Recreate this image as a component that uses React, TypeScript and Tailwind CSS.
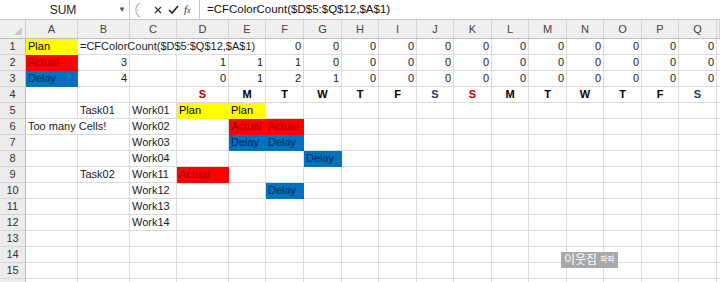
import React from "react";

const COLS = "grid-cols-[26px_52px_52px_47px_52px_37px_38px_38px_37px_38px_37px_38px_37px_38px_37px_38px_37px_38px_3px]";
const letters = ["A", "B", "C", "D", "E", "F", "G", "H", "I", "J", "K", "L", "M", "N", "O", "P", "Q", ""];

type Cell = {
  v?: string;
  fill?: "plan" | "actual" | "delay";
  align?: "left" | "right" | "center";
  span?: number;
  day?: "sun" | "sat" | "day";
};

const fillCls = {
  plan: "bg-[#ffff00] text-black",
  actual: "bg-[#ff0000] text-[#9c0006]",
  delay: "bg-[#0070c0] text-[#0f2a55]",
};

const zeros = (n: number): Cell[] => Array.from({ length: n }, () => ({ v: "0", align: "right" as const }));
const blanks = (n: number): Cell[] => Array.from({ length: n }, () => ({}));

const days: Cell[] = ["S", "M", "T", "W", "T", "F", "S", "S", "M", "T", "W", "T", "F", "S"].map((d, i) => ({
  v: d,
  align: "center",
  day: i === 0 || i === 7 ? "sun" : i === 6 || i === 13 ? "sat" : "day",
}));

const rows: Cell[][] = [
  [{ v: "Plan", fill: "plan" }, { v: "=CFColorCount($D$5:$Q$12,$A$1)", span: 4 }, ...zeros(12)],
  [{ v: "Actual", fill: "actual" }, { v: "3", align: "right" }, {}, { v: "1", align: "right" }, { v: "1", align: "right" }, { v: "1", align: "right" }, ...zeros(11)],
  [{ v: "Delay", fill: "delay" }, { v: "4", align: "right" }, {}, { v: "0", align: "right" }, { v: "1", align: "right" }, { v: "2", align: "right" }, { v: "1", align: "right" }, ...zeros(10)],
  [{}, {}, {}, ...days],
  [{}, { v: "Task01" }, { v: "Work01" }, { v: "Plan", fill: "plan" }, { v: "Plan", fill: "plan" }, ...blanks(12)],
  [{ v: "Too many Cells!", span: 2 }, { v: "Work02" }, {}, { v: "Actual", fill: "actual" }, { v: "Actual", fill: "actual" }, ...blanks(11)],
  [{}, {}, { v: "Work03" }, {}, { v: "Delay", fill: "delay" }, { v: "Delay", fill: "delay" }, ...blanks(11)],
  [{}, {}, { v: "Work04" }, {}, {}, {}, { v: "Delay", fill: "delay" }, ...blanks(10)],
  [{}, { v: "Task02" }, { v: "Work11" }, { v: "Actual", fill: "actual" }, ...blanks(13)],
  [{}, {}, { v: "Work12" }, {}, {}, { v: "Delay", fill: "delay" }, ...blanks(11)],
  [{}, {}, { v: "Work13" }, ...blanks(14)],
  [{}, {}, { v: "Work14" }, ...blanks(14)],
  blanks(17),
  blanks(17),
  blanks(17),
  blanks(17),
];

function GridCell({ c }: { c: Cell }) {
  const align = c.align === "right" ? "justify-end" : c.align === "center" ? "justify-center" : "justify-start";
  const dayCls = c.day === "sun" ? "font-bold text-[#c00000]" : c.day === "sat" ? "font-bold text-[#1f3864]" : c.day === "day" ? "font-bold text-black" : "";
  const span = c.span === 4 ? "col-span-4" : c.span === 2 ? "col-span-2" : "";
  return (
    <div
      className={`h-4 flex items-center px-[2px] whitespace-nowrap overflow-visible border-r border-b ${
        c.fill ? `${fillCls[c.fill]} border-transparent` : "border-[#dadada] text-[#1a1a1a]"
      } ${align} ${dayCls} ${span}`}
    >
      {c.v}
    </div>
  );
}

export default function App() {
  return (
    <div className="w-[720px] h-[282px] overflow-hidden bg-white text-[11px] leading-none" style={{ fontFamily: '"Liberation Sans", Arial, "Noto Sans CJK KR", sans-serif' }}>
      {/* formula bar */}
      <div className="h-5 flex items-stretch border-b border-[#c6c6c6] bg-white">
        <div className="w-[130px] flex items-center border-r border-[#d0d0d0]">
          <span className="flex-1 text-center text-[12px] text-[#222] pl-2">SUM</span>
          <span className="text-[8px] text-[#555] pr-[3px]">▼</span>
        </div>
        <div className="w-[70px] flex items-center bg-white border-r border-[#c6c6c6]">
          <svg width="10" height="18" viewBox="0 0 10 18" className="ml-[2px]">
            <path d="M8 2 A8 8 0 0 0 8 16" fill="none" stroke="#b8b8b8" strokeWidth="1.2" />
            <circle cx="6" cy="9" r="0.8" fill="#b8b8b8" />
          </svg>
          <svg width="10" height="10" viewBox="0 0 10 10" className="ml-[11px]">
            <path d="M2 2 L8 8 M8 2 L2 8" stroke="#333" strokeWidth="1.3" />
          </svg>
          <svg width="11" height="10" viewBox="0 0 11 10" className="ml-[5px]">
            <path d="M1 5 L4 8 L10 1" fill="none" stroke="#222" strokeWidth="1.6" />
          </svg>
          <span className="ml-[5px] text-[11px] italic text-[#333]" style={{ fontFamily: '"Liberation Serif", serif' }}>f<span className="text-[8px]">x</span></span>
        </div>
        <div className="flex-1 flex items-center pl-[7px] text-[11.5px] text-[#111]">=CFColorCount($D$5:$Q$12,$A$1)</div>
      </div>

      {/* column headers */}
      <div className={`grid ${COLS} h-[19px] bg-[#efefef] border-b border-[#bdbdbd] text-[#444] text-[11px]`}>
        <div className="relative border-r border-[#cfcfcf]">
          <div className="absolute right-[3px] bottom-[3px] w-0 h-0 border-l-[8px] border-l-transparent border-b-[8px] border-b-[#c9c9c9]" />
        </div>
        {letters.map((l, i) => (
          <div key={i} className="flex items-center justify-center border-r border-[#d4d4d4]">
            {l}
          </div>
        ))}
      </div>

      {/* rows */}
      {rows.map((r, ri) => (
        <div key={ri} className={`grid ${COLS}`}>
          <div className="h-4 flex items-center justify-center bg-[#ececec] border-r border-[#bdbdbd] border-b border-b-[#d4d4d4] text-[#333]">
            {ri < 15 ? ri + 1 : ""}
          </div>
          {r.map((c, ci) => (
            <GridCell key={ci} c={c} />
          ))}
          <div className="h-4 border-b border-[#dadada]" />
        </div>
      ))}

      {/* watermark */}
      <div className="relative">
        <div className="absolute left-[561px] top-[-43px] h-4 px-[3px] flex items-center gap-[3px] whitespace-nowrap bg-[#a8a8a8] text-white">
          <span className="text-[12px] leading-4">이웃집</span>
          <span className="text-[8px] leading-4">파파</span>
        </div>
      </div>
    </div>
  );
}
